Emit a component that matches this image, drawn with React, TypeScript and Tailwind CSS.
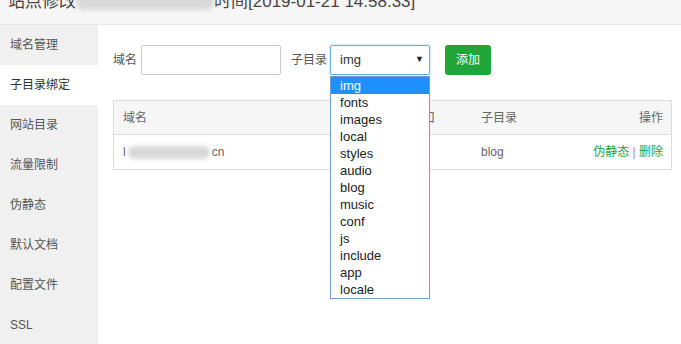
import { useState } from 'react'

const menu = ['域名管理', '子目录绑定', '网站目录', '流量限制', '伪静态', '默认文档', '配置文件', 'SSL']
const dirs = ['img', 'fonts', 'images', 'local', 'styles', 'audio', 'blog', 'music', 'conf', 'js', 'include', 'app', 'locale']

const font = { fontFamily: '"Liberation Sans", "Noto Sans CJK SC", sans-serif' }

function Blur({ className }: { className: string }) {
  return <span className={`inline-block rounded-full bg-[#d8d8d8] blur-[2px] align-middle ${className}`} />
}

export default function App() {
  const [active] = useState(1)

  return (
    <div style={font} className="w-[681px] h-[344px] overflow-hidden bg-white text-[#555]">
      <div className="h-[25px] bg-[#f6f6f6] border-b border-[#e8e8e8] overflow-hidden">
        <div className="-mt-[7px] pl-[8px] text-[17px] leading-[18px] text-[#444] whitespace-nowrap flex items-center">
          站点修改<Blur className="w-[138px] h-[16px]" />时间[2019-01-21 14:58:33]
        </div>
      </div>

      <div className="flex h-[319px]">
        <div className="w-[98px] bg-[#f0f0f0] flex flex-col">
          {menu.map((m, i) => (
            <div
              key={m}
              className={`h-[40px] flex items-center pl-[10px] pt-[1px] text-[12px] ${i === active ? 'bg-white text-[#333]' : 'text-[#555]'}`}
            >
              {m}
            </div>
          ))}
        </div>

        <div className="flex-1 pl-[15px] pt-[20px] text-[12px]">
          <div className="flex items-center h-[30px]">
            <span className="mr-[4px]">域名</span>
            <div className="w-[140px] h-[30px] border border-[#ccc] rounded-[2px]" />
            <span className="ml-[10px] mr-[3px]">子目录</span>
            <div className="relative">
              <div className="w-[100px] h-[30px] border border-[#66afe9] rounded-[2px] flex items-center justify-between pl-[9px] pr-[5px] text-[13px] text-[#333] shadow-[0_0_3px_rgba(102,175,233,0.6)]">
                <span>img</span>
                <span className="text-[9px] text-[#222]">▼</span>
              </div>
              <div className="absolute left-0 top-[31px] w-[100px] bg-white border border-[#7a9cd3] z-10">
                {dirs.map((d, i) => (
                  <div
                    key={d}
                    className={`h-[17px] leading-[17px] pl-[9px] text-[13px] ${i === 0 ? 'bg-[#1e90ff] text-white' : 'text-[#222]'}`}
                  >
                    {d}
                  </div>
                ))}
              </div>
            </div>
            <button className="ml-[15px] w-[46px] h-[30px] bg-[#20a53a] text-white rounded-[3px] text-[12px]">添加</button>
          </div>

          <div className="mt-[25px] w-[559px] border border-[#ddd]">
            <div className="grid grid-cols-[288px_70px_1fr_1fr] h-[34px] items-center bg-[#f6f6f6] border-b border-[#ddd] text-[#666]">
              <span className="pl-[9px]">域名</span>
              <span className="pl-[9px]">端口</span>
              <span className="pl-[9px]">子目录</span>
              <span className="pr-[8px] text-right">操作</span>
            </div>
            <div className="grid grid-cols-[288px_70px_1fr_1fr] h-[34px] items-center text-[#666]">
              <span className="pl-[9px] flex items-center">
                l<Blur className="w-[82px] h-[13px] mx-[2px]" />cn
              </span>
              <span className="pl-[9px]">80</span>
              <span className="pl-[9px]">blog</span>
              <span className="pr-[8px] text-right text-[#20a53a]">
                伪静态 <span className="text-[#999]">|</span> 删除
              </span>
            </div>
          </div>
        </div>
      </div>
    </div>
  )
}
